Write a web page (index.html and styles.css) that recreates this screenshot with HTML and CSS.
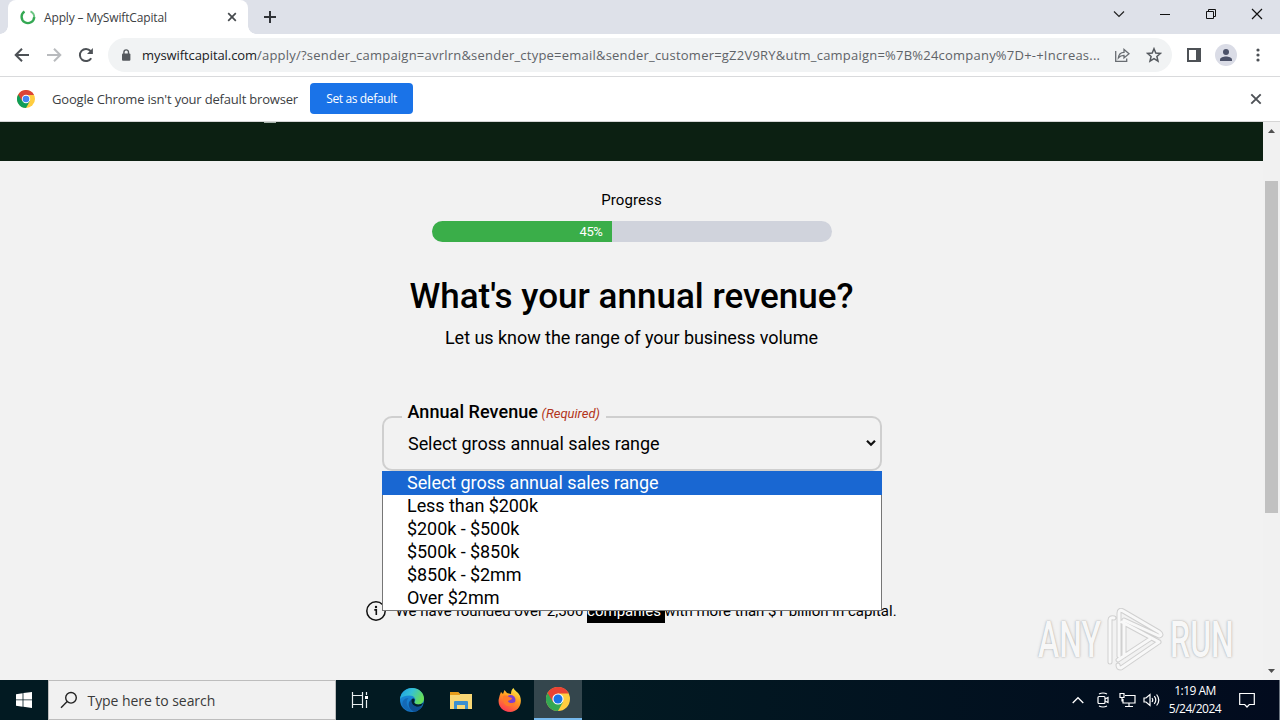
FILE: index.html
```html
<!DOCTYPE html>
<html lang="en">
<head>
  <meta charset="UTF-8" />
  <meta name="viewport" content="width=device-width, initial-scale=1" />
  <title>Apply – MySwiftCapital</title>
  <link rel="stylesheet" href="styles.css">
</head>
<body>

  <!-- tab strip -->
  <header class="tab-strip">
    <div class="tab">
      <svg class="spinner" width="16" height="16" viewBox="0 0 16 16" fill="none">
        <path d="M4.500 2.500A6.300 6.300 0 1 0 14.200 8" stroke="#34a853" stroke-width="2.400"/>
        <path d="M10.500 2.300A6.300 6.300 0 0 1 14.200 8.300" stroke="#6cc583" stroke-width="1.900"/>
      </svg>
      <span class="tab-title">Apply – MySwiftCapital</span>
      <svg class="tab-close" width="10" height="10" viewBox="0 0 10 10" stroke="#45494d" stroke-width="1.7"><path d="M1.2 1.2l7.6 7.6M8.8 1.2L1.2 8.8"/></svg>
    </div>
    <svg class="new-tab" width="14" height="14" viewBox="0 0 14 14" stroke="#303338" stroke-width="2"><path d="M7 1v12M1 7h12"/></svg>
    <div class="window-controls">
      <svg width="12" height="12" viewBox="0 0 12 12" fill="none" stroke="#222" stroke-width="1.200"><path d="M1 3.500l5 5 5-5"/></svg>
      <svg width="12" height="12" viewBox="0 0 12 12" fill="none" stroke="#111"><path d="M1 6.5h10"/></svg>
      <svg width="12" height="12" viewBox="0 0 12 12" fill="none" stroke="#111"><path d="M1.5 3.5h7v7h-7zM3.5 3.5v-2h7v7h-2"/></svg>
      <svg width="12" height="12" viewBox="0 0 12 12" fill="none" stroke="#111" stroke-width="1.2"><path d="M1 1l10 10M11 1L1 11"/></svg>
    </div>
  </header>

  <!-- toolbar -->
  <nav class="toolbar">
    <svg class="nav-icon" width="16" height="16" viewBox="0 0 16 16" fill="none" stroke="#4d5156" stroke-width="2"><path d="M15 8H2.5M8 1.7L1.7 8 8 14.3"/></svg>
    <svg class="nav-icon" width="16" height="16" viewBox="0 0 16 16" fill="none" stroke="#b9bbbe" stroke-width="2"><path d="M1 8h12.5M8 1.7L14.3 8 8 14.3"/></svg>
    <svg class="nav-icon" width="16" height="16" viewBox="0 0 16 16"><path d="M13.2 11.2A6.1 6.1 0 1 1 12.6 4" fill="none" stroke="#4d5156" stroke-width="2"/><path d="M14.9.9v6H9z" fill="#4d5156"/></svg>
    <div class="omnibox">
      <svg class="lock" width="10" height="12" viewBox="0 0 10 12"><rect x="1" y="4.5" width="8.4" height="7.2" rx="1" fill="#55595e"/><path d="M2.9 5V3.2a2.3 2.3 0 0 1 4.6 0V5" fill="none" stroke="#55595e" stroke-width="1.4"/></svg>
      <span class="url"><span class="domain">myswiftcapital.com</span><span class="path">/apply/?sender_campaign=avrlrn&amp;sender_ctype=email&amp;sender_customer=gZ2V9RY&amp;utm_campaign=%7B%24company%7D+-+Increas...</span></span>
      <svg class="share" width="16" height="16" viewBox="0 0 16 16" fill="none" stroke="#686c71" stroke-width="1.3"><path d="M1.700 4v10.300h11V11.500"/><path d="M4.400 10.800C4.800 7.200 6.800 5.400 10 5.300V2.500l5 4.300-5 4.100V8.300c-2.400 0-4 .5-5.600 2.500z"/></svg>
      <svg class="star" width="16" height="16" viewBox="0 0 16 16" fill="none" stroke="#55595e" stroke-width="1.5"><path d="M8 1.7l1.8 4.3 4.700.4-3.600 3.100 1.100 4.600L8 11.600l-4 2.500 1.100-4.600L1.500 6.400l4.700-.4z"/></svg>
    </div>
    <svg class="side-panel" width="14" height="14" viewBox="0 0 14 14"><rect x="1" y="1" width="12" height="12" fill="none" stroke="#4d5156" stroke-width="2"/><rect x="9" y="1" width="4" height="12" fill="#4d5156"/></svg>
    <div class="avatar">
      <svg width="14" height="14" viewBox="0 0 14 14" fill="#4b5168"><circle cx="7" cy="3.9" r="3"/><path d="M1 13v-1.600C1 9.300 4.500 8.400 7 8.400s6 .9 6 3V13z"/></svg>
    </div>
    <svg class="more" width="4" height="14" viewBox="0 0 4 14" fill="#4d5156"><circle cx="2" cy="2" r="1.6"/><circle cx="2" cy="7" r="1.6"/><circle cx="2" cy="12" r="1.6"/></svg>
  </nav>

  <!-- default browser prompt -->
  <div class="infobar">
    <svg class="chrome-logo" width="18" height="18" viewBox="0 0 24 24">
      <circle cx="12" cy="12" r="12" fill="#ffcd40"/>
      <path d="M1.600 6A12 12 0 0 0 12 24l5-9-5-3z" fill="#0f9d58"/>
      <path d="M1.600 6L7 15l5-8.500h10.700A12 12 0 0 0 1.600 6z" fill="#db4437"/>
      <circle cx="12" cy="12" r="5.600" fill="#fff"/><circle cx="12" cy="12" r="4.400" fill="#4285f4"/>
    </svg>
    <span class="infobar-text">Google Chrome isn't your default browser</span>
    <button class="default-btn">Set as default</button>
    <svg class="infobar-close" width="12" height="12" viewBox="0 0 12 12" stroke="#4d5156" stroke-width="1.9"><path d="M1.300 1.300l9.400 9.400M10.700 1.300l-9.400 9.400"/></svg>
  </div>

  <!-- page -->
  <div class="viewport">
    <main class="page">
      <div class="site-header"><span class="logo-edge"></span></div>
      <div class="form">
        <p class="progress-label">Progress</p>
        <div class="progress">
          <div class="progress-fill" style="width: 45%"><span>45%</span></div>
        </div>
        <h1>What's your annual revenue?</h1>
        <p class="lead">Let us know the range of your business volume</p>

        <div class="field">
          <div class="field-label">Annual Revenue <em>(Required)</em></div>
          <div class="select">
            <span>Select gross annual sales range</span>
            <svg width="10" height="8" viewBox="0 0 10 8" fill="none" stroke="#111" stroke-width="2.2"><path d="M1 1.700l4 4 4-4"/></svg>
          </div>
          <ul class="options">
            <li class="active">Select gross annual sales range</li>
            <li>Less than $200k</li>
            <li>$200k - $500k</li>
            <li>$500k - $850k</li>
            <li>$850k - $2mm</li>
            <li>Over $2mm</li>
          </ul>
        </div>

        <div class="note">
          <svg width="20" height="20" viewBox="0 0 20 20"><circle cx="10" cy="10" r="9.2" fill="none" stroke="#111" stroke-width="1.5"/><circle cx="10" cy="6" r="1.2" fill="#111"/><path d="M8.300 8.900h2v5" fill="none" stroke="#111" stroke-width="1.6"/></svg>
          <span class="note-text">We have founded over 2,500 <mark>companies </mark>with more than $1 billion in capital.</span>
        </div>
      </div>
    </main>
    <div class="scrollbar">
      <svg width="7" height="4" viewBox="0 0 7 4" fill="#505050"><path d="M0 4l3.500-4L7 4z"/></svg>
      <div class="thumb"></div>
      <svg width="7" height="4" viewBox="0 0 7 4" fill="#505050"><path d="M0 0l3.500 4L7 0z"/></svg>
    </div>

    <div class="watermark">
      <span>ANY</span>
      <svg width="60" height="64" viewBox="0 0 60 64" fill="none" stroke-linejoin="round" stroke-linecap="round">
        <path class="mark-edge" d="M4 54V12q0-3 4-2M13 48V5q0-4 4-2l36 21q4 3 0 4L18 12v36M53 34L15 60q-3 0-3-3M53 34L16 14M44 31L12 52"/>
        <path class="mark-line" d="M4 54V12q0-3 4-2M13 48V5q0-4 4-2l36 21q4 3 0 4L18 12v36M53 34L15 60q-3 0-3-3M53 34L16 14M44 31L12 52"/>
      </svg>
      <span>RUN</span>
    </div>
  </div>

  <!-- taskbar -->
  <footer class="taskbar">
    <div class="start">
      <svg width="16" height="16" viewBox="0 0 16 16" fill="#fff"><path d="M0 2.200L6.600 1.200v6.300H0zM7.400 1.100L16 0v7.500H7.400zM0 8.300h6.600v6.400L0 13.800zM7.400 8.300H16V16l-8.600-1.200z"/></svg>
    </div>
    <div class="search">
      <svg width="18" height="18" viewBox="0 0 18 18" fill="none" stroke="#222" stroke-width="1.4"><circle cx="11" cy="6.8" r="5.3"/><path d="M7.200 10.600L1 16.800"/></svg>
      <span>Type here to search</span>
    </div>
    <div class="app task-view">
      <svg width="18" height="18" viewBox="0 0 18 18" fill="none" stroke="#e8eef0" stroke-width="1.2"><path d="M1.500 1v3.500h10V1M1.500 17v-3.500h10V17M1.500 4.500v9M11.500 4.500v9M15.500 1v3M15.500 9v8"/><path d="M14 5h3v3h-3z" fill="#fff" stroke="none"/></svg>
    </div>
    <div class="app">
      <svg width="24" height="24" viewBox="0 0 24 24">
        <defs>
          <linearGradient id="edgeTop" x1="0" y1="0" x2="1" y2=".4"><stop offset="0" stop-color="#1b9de2"/><stop offset=".5" stop-color="#35c1d6"/><stop offset="1" stop-color="#66dd58"/></linearGradient>
          <linearGradient id="edgeBody" x1="0" y1="0" x2="0" y2="1"><stop offset="0" stop-color="#1b8fdd"/><stop offset="1" stop-color="#1474c4"/></linearGradient>
        </defs>
        <circle cx="12" cy="12" r="12" fill="url(#edgeBody)"/>
        <path d="M0 11C1 4 6 0 12 0c7 0 12 5 12 10.500 0 4-3 6-6 6-2.500 0-4.300-1-3.600-2.200C17 11 14 7.500 9.500 7.500 5 7.500 1.500 9 0 11z" fill="url(#edgeTop)"/>
        <path d="M8.500 10c-3 3-2.500 9 4 13-4 .5-8-1.500-10-5-1-5 2-8 6-8z" fill="#1469b5"/>
        <path d="M11.500 11.500c-1 4 3 7.500 7 7.500 2 0 3.400-.6 4.200-1.200C21 21 17.500 23.500 14 23.800 8 21 7 14 11.500 11.500z" fill="#0f4f93"/>
        <path d="M11.500 11.500c1-1.500 3-1 3.200.3.200 1.500-1.200 2.700.3 3.700 3 2 6 .8 8.200-.7-1 3-3 4-5 4-4 0-7.700-3.300-6.700-7.300z" fill="#04202f"/>
      </svg>
    </div>
    <div class="app">
      <svg width="22" height="20" viewBox="0 0 22 20"><path d="M0 2h8l2 2h12v15H0z" fill="#f8d775"/><path d="M0 2h8l2 2v1H0z" fill="#e69c1a"/><path d="M4 19v-7q0-1 1-1h12q1 0 1 1v7h-3v-4H7v4z" fill="#3b8fd0"/></svg>
    </div>
    <div class="app">
      <svg width="24" height="24" viewBox="0 0 24 24">
        <defs><linearGradient id="fox" x1=".8" y1="0" x2=".3" y2="1"><stop offset="0" stop-color="#fff14a"/><stop offset=".45" stop-color="#ff9a1f"/><stop offset="1" stop-color="#ff3656"/></linearGradient></defs>
        <path d="M3 4l2 2 1.500-4L9 5l4 1c0-3 1-5 2.500-6 1 3 5 4 6.500 8 3 8-2 16-10 16C4 24-1 17 1 10c.300-2 1.200-4 2-6z" fill="url(#fox)"/>
        <circle cx="12.500" cy="12" r="5" fill="#7a3fd1"/>
        <path d="M5 8c3-1 5 0 6 1l3 1c0 2-3 2-4 3 1 3 5 2 7 1-1 5-9 6-11 1-1-2-1-5-1-7z" fill="#ff7a2a"/>
      </svg>
    </div>
    <div class="app current">
      <svg width="24" height="24" viewBox="0 0 24 24">
        <circle cx="12" cy="12" r="12" fill="#ffcd40"/>
        <path d="M1.600 6A12 12 0 0 0 12 24l5-9-5-3z" fill="#34a853"/>
        <path d="M1.600 6L7 15l5-8.500h10.700A12 12 0 0 0 1.600 6z" fill="#ea4335"/>
        <circle cx="12" cy="12" r="5.6" fill="#fff"/><circle cx="12" cy="12" r="4.5" fill="#1a73e8"/>
      </svg>
    </div>
    <div class="tray">
      <svg class="tray-arrow" width="12" height="8" viewBox="0 0 12 8" fill="none" stroke="#fff" stroke-width="1.3"><path d="M.7 7L6 1.700 11.300 7"/></svg>
      <svg width="12" height="16" viewBox="0 0 12 16" fill="none" stroke="#fff" stroke-width="1.2"><rect x="1" y="4.5" width="7" height="7" rx="1"/><path d="M8 7l3-1.500v5L8 9M2 2q4-2 8 0M2 14q4 2 8 0"/></svg>
      <svg class="tray-net" width="17" height="16" viewBox="0 0 17 16" fill="none" stroke="#fff" stroke-width="1.2"><path d="M6 3.500h10V11H4V7M10 11v3M6 14.500h8M1 1.500h4v4H1zM3 5.500v4"/></svg>
      <svg class="tray-sound" width="17" height="14" viewBox="0 0 17 14" fill="none" stroke="#fff" stroke-width="1.2"><path d="M1 5h2l4-3.500v11L3 9H1zM9 5q1.500 2 0 4M11.300 3.200q3 3.800 0 7.600M13.600 1.500q4.400 5.500 0 11"/></svg>
      <div class="clock"><span>1:19 AM</span><span>5/24/2024</span></div>
      <svg class="action-center" width="16" height="16" viewBox="0 0 16 16" fill="none" stroke="#fff" stroke-width="1.2"><path d="M.7 1.500h14.600v11h-5L8 15l-2.300-2.500h-5z"/></svg>
    </div>
  </footer>

</body>
</html>
```

FILE: styles.css
```css
* {
  box-sizing: border-box;
  margin: 0;
  padding: 0;
}

body {
  width: 1280px;
  height: 720px;
  overflow: hidden;
  display: flex;
  flex-direction: column;
  font-family: 'Open Sans', 'Noto Sans', sans-serif;
  background: #f2f2f2;
}

svg {
  display: block;
  flex-shrink: 0;
}

/* tab strip */
.tab-strip {
  height: 34px;
  background: #dee1e9;
  display: flex;
  align-items: center;
  padding-left: 8px;
}

.tab {
  position: relative;
  width: 240px;
  height: 34px;
  background: #fff;
  border-radius: 8px 8px 0 0;
  display: flex;
  align-items: center;
  padding: 0 11px 0 12px;
}

.tab::before,
.tab::after {
  content: '';
  position: absolute;
  bottom: 0;
  width: 8px;
  height: 8px;
}

.tab::before {
  left: -8px;
  background: radial-gradient(circle at 0 0, transparent 7.5px, #fff 8px);
}

.tab::after {
  right: -8px;
  background: radial-gradient(circle at 100% 0, transparent 7.5px, #fff 8px);
}

.tab-title {
  margin-left: 8px;
  font-size: 12px;
  letter-spacing: -0.15px;
  color: #3c4043;
  white-space: nowrap;
}

.tab-close {
  margin-left: auto;
}

.new-tab {
  margin-left: 15px;
}

.window-controls {
  margin-left: auto;
  display: flex;
  gap: 34px;
  padding: 0 17px 6px 0;
}

/* toolbar */
.toolbar {
  height: 43px;
  background: #fff;
  border-bottom: 1px solid #d9dadc;
  display: flex;
  align-items: center;
  padding: 0 20px 0 14px;
}

.nav-icon {
  margin-right: 16px;
}

.omnibox {
  width: 1064px;
  height: 34px;
  margin-left: -2px;
  border-radius: 17px;
  background: #f1f3f4;
  display: flex;
  align-items: center;
  padding: 0 10px 0 13px;
}

.url {
  margin-left: 11px;
  width: 960px;
  font-size: 13px;
  white-space: nowrap;
}

.domain {
  color: #202124;
  letter-spacing: -0.08px;
}

.path {
  color: #5f6368;
  letter-spacing: 0.22px;
}

.share {
  margin-left: 12px;
}

.star {
  margin-left: 16px;
}

.side-panel {
  margin-left: 15px;
}

.avatar {
  width: 22px;
  height: 22px;
  margin-left: 14px;
  border-radius: 50%;
  background: #dadce6;
  display: flex;
  align-items: center;
  justify-content: center;
}

.more {
  margin-left: auto;
}

/* default browser prompt */
.infobar {
  height: 45px;
  background: #fff;
  border-bottom: 1px solid #d5d5d5;
  display: flex;
  align-items: center;
  padding: 0 18px 0 17px;
}

.infobar-text {
  margin-left: 17px;
  width: 258px;
  font-size: 13px;
  letter-spacing: -0.19px;
  color: #3c4043;
  white-space: nowrap;
}

.default-btn {
  width: 103px;
  height: 31px;
  margin-top: -1px;
  border: none;
  border-radius: 4px;
  background: #1a73e8;
  color: #fff;
  font-family: inherit;
  font-size: 12px;
  letter-spacing: -0.36px;
  white-space: nowrap;
}

.infobar-close {
  margin-left: auto;
}

/* page */
.viewport {
  position: relative;
  height: 558px;
  display: flex;
}

.page {
  width: 1263px;
  font-family: Roboto, sans-serif;
  color: #000;
}

.site-header {
  height: 39px;
  background: #0c2012;
  padding-left: 264px;
}

.logo-edge {
  display: block;
  width: 12px;
  height: 1px;
  background: #a9b5ac;
}

.form {
  width: 532px;
  margin: 0 auto;
  display: flex;
  flex-direction: column;
  align-items: center;
}

.progress-label {
  margin-top: 29px;
  font-size: 15px;
  line-height: 20px;
  letter-spacing: 0.1px;
}

.progress {
  width: 400px;
  height: 21px;
  margin-top: 11px;
  border-radius: 11px;
  overflow: hidden;
  background: #d0d3dc;
}

.progress-fill {
  height: 21px;
  background: #3aae49;
  color: #fff;
  font-size: 13px;
  line-height: 21px;
  letter-spacing: -0.4px;
  text-align: right;
  padding-right: 9px;
}

h1 {
  margin-top: 33px;
  font-size: 35px;
  line-height: 44px;
  font-weight: 500;
  white-space: nowrap;
}

.lead {
  margin-top: 7px;
  font-size: 18px;
  line-height: 24px;
  letter-spacing: -0.04px;
  white-space: nowrap;
}

.field {
  position: relative;
  width: 500px;
  margin-top: 66px;
}

.field-label {
  position: absolute;
  left: 20px;
  top: -15px;
  padding: 0 6px;
  background: #f2f2f2;
  font-size: 18px;
  line-height: 22px;
  letter-spacing: 0.07px;
  font-weight: 500;
  white-space: nowrap;
}

.field-label em {
  margin-left: -1px;
  font-size: 13px;
  letter-spacing: 0;
  font-weight: 400;
  color: #b3351a;
}

.select {
  height: 55px;
  border: 2px solid #cfcfcf;
  border-radius: 10px;
  display: flex;
  align-items: center;
  justify-content: space-between;
  padding: 0 4px 1px 24.5px;
  font-size: 18px;
  letter-spacing: -0.06px;
}

.options {
  position: absolute;
  left: 0;
  top: 55px;
  width: 500px;
  height: 140px;
  border: 1px solid #767676;
  border-top: none;
  background: #fff;
  list-style: none;
  font-size: 18px;
  letter-spacing: -0.06px;
}

.options li {
  height: 23px;
  line-height: 23px;
  padding-left: 24.5px;
}

.options .active {
  height: 24px;
  margin: 0 -1px -1px;
  padding-left: 25.5px;
  background: #1967d2;
  color: #fff;
}

.note {
  width: 532px;
  margin-top: 128px;
  display: flex;
  align-items: center;
  gap: 10px;
}

.note-text {
  font-size: 15px;
  line-height: 24px;
  white-space: nowrap;
}

.note mark {
  padding: 3px 0;
  background: #000;
  color: #fff;
}

.scrollbar {
  width: 17px;
  background: #f1f1f1;
  display: flex;
  flex-direction: column;
  align-items: center;
  padding: 7px 0;
}

.thumb {
  width: 13px;
  height: 332px;
  margin: 48px 0 auto;
  background: #c1c1c1;
}

.watermark {
  position: absolute;
  left: 1038px;
  top: 486px;
  display: flex;
  align-items: center;
  gap: 4px;
  font-family: Roboto, sans-serif;
  font-size: 50px;
  font-weight: 500;
  color: #f7f7f7;
  text-shadow: 0 0 3px #aaa, 0 0 1px #ccc;
}

.watermark span {
  width: 64px;
  white-space: nowrap;
  transform: scaleX(0.64);
  transform-origin: left;
}

.mark-edge {
  stroke: #d0d0d0;
  stroke-width: 5;
}

.mark-line {
  stroke: #f8f8f8;
  stroke-width: 3;
}

/* taskbar */
.taskbar {
  height: 40px;
  background: linear-gradient(90deg, #021a22 0%, #021a22 45%, #020b1e 100%);
  display: flex;
}

.start,
.app {
  width: 48px;
  display: flex;
  align-items: center;
  justify-content: center;
}

.search {
  width: 288px;
  background: #f1f1f1;
  border: 1px solid #bdbdbd;
  display: flex;
  align-items: center;
  padding-left: 11px;
  gap: 9.5px;
  font-size: 14px;
  letter-spacing: -0.06px;
  color: #3a3a3a;
}

.app {
  width: 49px;
}

.task-view {
  width: 48px;
  margin-right: 3px;
}

.current {
  width: 48px;
  background: #34464d;
  border-bottom: 2px solid #76b9ed;
}

.tray {
  margin-left: auto;
  display: flex;
  align-items: center;
  gap: 8px;
  padding-right: 24px;
  border-right: 1px solid #6b7480;
}

.tray-arrow {
  margin-right: 5px;
}

.tray-net {
  margin-left: 2px;
}

.tray-sound {
  margin-left: -1px;
}

.clock {
  width: 54px;
  display: flex;
  flex-direction: column;
  align-items: center;
  font-size: 12px;
  line-height: 18px;
  letter-spacing: -0.5px;
  color: #fff;
  white-space: nowrap;
}

.action-center {
  margin-left: 9px;
}
```
